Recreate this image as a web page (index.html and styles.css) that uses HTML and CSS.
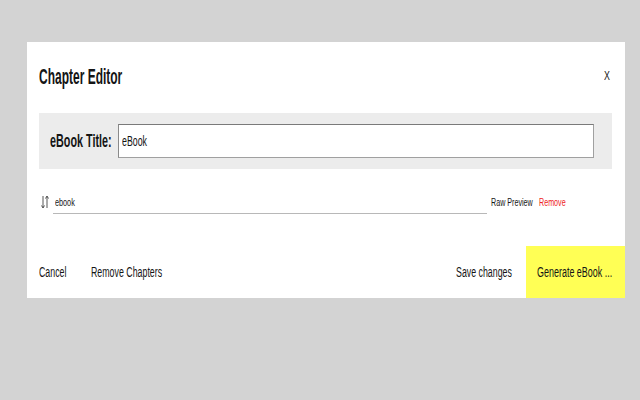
FILE: index.html
```html
<!DOCTYPE html>
<html lang="en">
  <head>
    <meta charset="UTF-8" />
    <title>Chapter Editor</title>
    <link rel="stylesheet" href="styles.css">
  </head>

  <body>
    <div class="modal">
      <div class="modal_header">
        <h1 class="sq heading"><span>Chapter Editor</span></h1>
        <span class="sq close"><span>X</span></span>
      </div>

      <div class="title_box">
        <label class="sq title_label"><span>eBook Title:</span></label>
        <div class="title_input">
          <span class="sq title_value"><span>eBook</span></span>
        </div>
      </div>

      <div class="chapter">
        <svg class="handle" width="8" height="14" viewBox="0 0 8 14">
          <path d="M2 1 V12.5 M0.5 10.5 L2 13 L3.5 10.5" />
          <path d="M6 13 V1.5 M4.5 3.5 L6 1 L7.5 3.5" />
        </svg>
        <div class="chapter_input">
          <span class="sq chapter_value"><span>ebook</span></span>
        </div>
        <span class="sq link preview"><span>Raw Preview</span></span>
        <span class="sq link remove"><span>Remove</span></span>
      </div>

      <div class="modal_footer">
        <span class="sq footer_btn cancel"><span>Cancel</span></span>
        <span class="sq footer_btn remove_all"><span>Remove Chapters</span></span>
        <span class="spacer"></span>
        <span class="sq footer_btn save"><span>Save changes</span></span>
        <div class="generate">
          <span class="sq footer_btn gen_label"><span>Generate eBook ...</span></span>
        </div>
      </div>
    </div>
  </body>
</html>
```

FILE: styles.css
```css
* {
  box-sizing: border-box;
  margin: 0px;
  padding: 0px;
}

body {
  background-color: #d3d3d3;
  font-family: "Liberation Sans", Arial, sans-serif;
  color: #151515;
}

/* condensed text: the box keeps the squeezed width */
.sq {
  display: inline-block;
  white-space: nowrap;
  --k: 0.63;
}

.sq > span {
  display: inline-block;
  transform: scaleX(var(--k));
  transform-origin: left center;
}

.modal {
  background-color: white;
  margin: 42px 0 0 27px;
  width: 598px;
  height: 256px;
  display: flex;
  flex-direction: column;
}

.modal_header {
  display: flex;
  align-items: center;
  justify-content: space-between;
  height: 70px;
  padding: 0 15px 0 12px;
}

.heading {
  font-size: 22px;
  font-weight: bold;
  width: 83px;
  --k: 0.545;
}

.close {
  font-size: 13px;
  width: 6px;
  margin-top: -3px;
  --k: 0.68;
}

.title_box {
  background-color: #ececec;
  margin: 1px 13px 0 12px;
  height: 56px;
  display: flex;
  align-items: center;
  padding: 0 18px 0 11px;
  gap: 6px;
}

.title_label {
  font-size: 18px;
  font-weight: bold;
  width: 62px;
  --k: 0.6;
}

.title_input {
  flex: 1;
  height: 34px;
  background-color: white;
  border: 1px solid #a0a0a0;
  border-top-color: #7a7a7a;
  border-left-color: #8a8a8a;
  display: flex;
  align-items: center;
  padding-left: 3px;
}

.title_value {
  font-size: 14px;
  width: 25px;
}

.chapter {
  display: flex;
  align-items: center;
  margin-top: 21px;
  padding: 0 60px 0 14px;
  height: 24px;
}

.handle {
  width: 12px;
  height: 14px;
  padding-right: 4px;
  fill: none;
  stroke: #444;
  stroke-width: 0.9;
}

.chapter_input {
  flex: 1;
  height: 24px;
  border-bottom: 1px solid #b8b8b8;
  display: flex;
  align-items: center;
  padding-left: 2px;
}

.chapter_value {
  font-size: 11px;
  width: 20px;
  --k: 0.66;
}

.link {
  font-size: 11px;
  --k: 0.65;
}

.preview {
  width: 42px;
  margin-left: 4px;
}

.remove {
  color: #ee2222;
  width: 26px;
  margin-left: 6px;
}

.modal_footer {
  margin-top: auto;
  height: 52px;
  display: flex;
  align-items: center;
  padding-left: 12px;
}

.footer_btn {
  font-size: 14px;
  --k: 0.63;
}

.cancel {
  width: 28px;
  margin-right: 24px;
}

.remove_all {
  width: 72px;
}

.spacer {
  flex: 1;
}

.save {
  width: 57px;
  margin-right: 13px;
}

.generate {
  background-color: #ffff55;
  height: 52px;
  width: 99px;
  display: flex;
  align-items: center;
  padding-left: 11px;
}

.gen_label {
  width: 76px;
  --k: 0.64;
}
```
